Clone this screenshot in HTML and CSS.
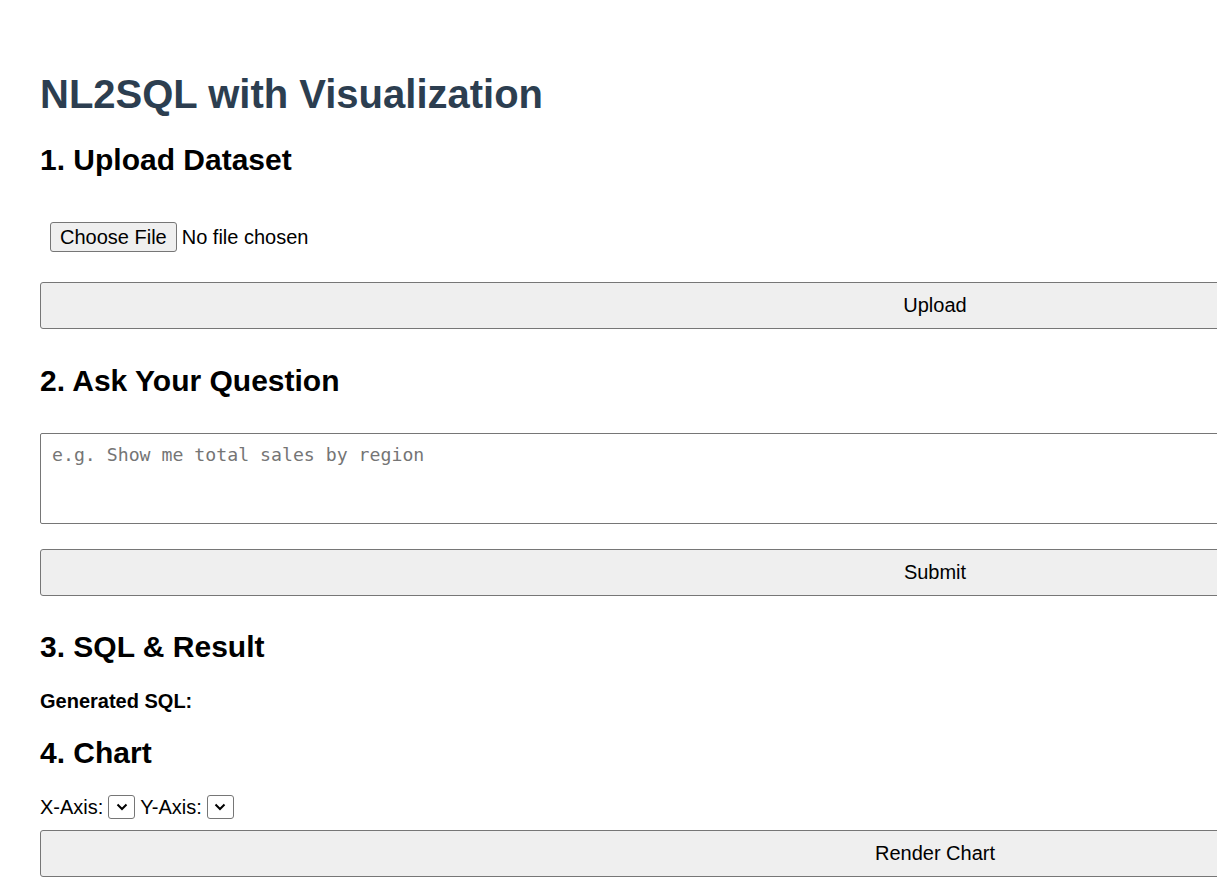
FILE: index.html
```html
<!DOCTYPE html>
<html lang="en">
<head>
<meta charset="utf-8">
<title>NL2SQL with Visualization</title>
<link rel="stylesheet" href="styles.css">
</head>
<body>
<main class="page">
  <h1 class="title">NL2SQL with Visualization</h1>

  <section class="section">
    <h2 class="heading">1. Upload Dataset</h2>
    <div class="file-row">
      <span class="file-btn">Choose File</span>
      <span class="file-name">No file chosen</span>
    </div>
    <button class="wide-btn upload-btn" type="button">Upload</button>
  </section>

  <section class="section">
    <h2 class="heading">2. Ask Your Question</h2>
    <textarea class="question" placeholder="e.g. Show me total sales by region"></textarea>
    <button class="wide-btn submit-btn" type="button">Submit</button>
  </section>

  <section class="section">
    <h2 class="heading">3. SQL &amp; Result</h2>
    <div class="sql-label">Generated SQL:</div>
  </section>

  <section class="section">
    <h2 class="heading">4. Chart</h2>
    <div class="axis-row">
      <span>X-Axis:</span>
      <span class="select"><svg viewBox="0 0 12 8" width="12" height="8"><path d="M1.5 1.5 L6 6 L10.5 1.5" fill="none" stroke="#000" stroke-width="2"/></svg></span>
      <span>Y-Axis:</span>
      <span class="select"><svg viewBox="0 0 12 8" width="12" height="8"><path d="M1.5 1.5 L6 6 L10.5 1.5" fill="none" stroke="#000" stroke-width="2"/></svg></span>
    </div>
    <button class="wide-btn render-btn" type="button">Render Chart</button>
  </section>
</main>
</body>
</html>
```

FILE: styles.css
```css
html, body {
  margin: 0;
  padding: 0;
  overflow: hidden;
  background: #fff;
}

body {
  font-family: "Liberation Sans", Arial, sans-serif;
  font-size: 20px;
  color: #000;
}

.page {
  padding: 40px 0 0 40px;
  width: 1790px;
}

.title {
  font-size: 40px;
  font-weight: bold;
  color: #2c3e50;
  margin: 31px 0 26px;
  line-height: 46px;
}

.heading {
  font-size: 30px;
  font-weight: bold;
  margin: 0;
  line-height: 34px;
}

.section {
  display: flex;
  flex-direction: column;
}

.file-row {
  display: flex;
  align-items: center;
  gap: 5px;
  margin: 45px 0 0 10px;
  height: 30px;
}

.file-btn {
  box-sizing: border-box;
  height: 30px;
  padding: 0 9px;
  border: 1px solid #767676;
  border-radius: 3px;
  background: #efefef;
  display: flex;
  align-items: center;
  line-height: 1;
}

.file-name {
  line-height: 1;
}

.wide-btn {
  box-sizing: border-box;
  width: 1790px;
  height: 47px;
  border: 1px solid #767676;
  border-radius: 3px;
  background: #efefef;
  font-family: "Liberation Sans", Arial, sans-serif;
  font-size: 20px;
  color: #000;
  padding: 0;
}

.upload-btn { margin: 30px 0 35px; }
.submit-btn { margin: 25px 0 34px; }
.render-btn { margin-top: 11px; }

.question {
  box-sizing: border-box;
  width: 1790px;
  height: 91px;
  margin-top: 35px;
  border: 1px solid #767676;
  border-radius: 2px;
  padding: 10px 11px;
  resize: none;
  font-family: "DejaVu Sans Mono", "Liberation Mono", monospace;
  font-size: 18.2px;
  display: block;
}

.question::placeholder {
  color: #757575;
}

.sql-label {
  font-weight: bold;
  font-size: 20px;
  margin: 26px 0 23px;
  line-height: 23px;
}

.axis-row {
  display: flex;
  align-items: center;
  gap: 5px;
  margin-top: 25px;
  height: 24px;
}

.select {
  box-sizing: border-box;
  width: 27px;
  height: 24px;
  border: 1px solid #767676;
  border-radius: 3px;
  background: #fff;
  display: flex;
  align-items: center;
  justify-content: center;
}
```
